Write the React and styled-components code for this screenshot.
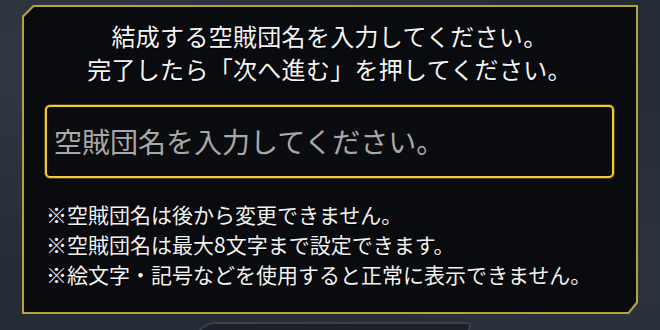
import React from "react";
import styled, { createGlobalStyle } from "styled-components";

const Global = createGlobalStyle`
  html, body {
    margin: 0;
    padding: 0;
    background: #262c35;
  }
  body {
    font-family: "Noto Sans CJK JP", "Noto Sans", sans-serif;
    overflow: hidden;
  }
`;

const Page = styled.div`
  width: 660px;
  height: 330px;
  box-sizing: border-box;
  padding: 5px 22px 0;
  overflow: hidden;
  background:
    radial-gradient(ellipse at 10% 20%, rgba(70, 80, 95, 0.35), transparent 60%),
    radial-gradient(ellipse at 90% 80%, rgba(60, 70, 85, 0.3), transparent 55%),
    #252b34;
`;

const Frame = styled.div`
  width: 616px;
  height: 309px;
  box-sizing: border-box;
  padding: 2px;
  background: #aea53c;
  clip-path: polygon(11px 0, 100% 0, 100% calc(100% - 11px), calc(100% - 9px) 100%, 0 100%, 0 11px);
`;

const Panel = styled.div`
  height: 100%;
  box-sizing: border-box;
  background: #0a0b0e;
  clip-path: polygon(10px 0, 100% 0, 100% calc(100% - 10px), calc(100% - 8px) 100%, 0 100%, 0 10px);
  padding: 12px 22px 0 21px;
  display: flex;
  flex-direction: column;
`;

const Lead = styled.p`
  margin: 0;
  text-align: center;
  color: #f4f4f4;
  font-size: 24px;
  line-height: 33px;
  letter-spacing: 0.3px;
  text-shadow: 1px 1px 1px #000;
`;

const Field = styled.input`
  margin-top: 20px;
  height: 73px;
  box-sizing: border-box;
  width: 100%;
  border: 2px solid #eccb3c;
  border-radius: 5px;
  box-shadow: 0 0 0 1px #4a3c12;
  background: #0b0c0f;
  padding: 0 0 2px 7px;
  font-family: inherit;
  font-size: 28px;
  color: #dcdcdc;
  outline: none;
  &::placeholder {
    color: #a9a9a9;
  }
`;

const Notes = styled.ul`
  list-style: none;
  margin: 21px 0 0;
  padding: 0 0 0 1px;
`;

const Note = styled.li`
  color: #f2f2f2;
  font-size: 21px;
  line-height: 30px;
  text-shadow: 1px 1px 1px #000;
  white-space: nowrap;
`;

const NextButton = styled.div`
  margin: 8px auto 0;
  width: 270px;
  height: 40px;
  border: 2px solid #3a414b;
  border-radius: 18px 4px 4px 4px;
  transform: skewX(-12deg);
  background: #1c2128;
`;

export default function App() {
  return (
    <>
      <Global />
      <Page>
        <Frame>
          <Panel>
            <Lead>
              結成する空賊団名を入力してください。
              <br />
              完了したら「次へ進む」を押してください。
            </Lead>
            <Field placeholder="空賊団名を入力してください。" />
            <Notes>
              <Note>※空賊団名は後から変更できません。</Note>
              <Note>※空賊団名は最大8文字まで設定できます。</Note>
              <Note>※絵文字・記号などを使用すると正常に表示できません。</Note>
            </Notes>
          </Panel>
        </Frame>
        <NextButton />
      </Page>
    </>
  );
}
